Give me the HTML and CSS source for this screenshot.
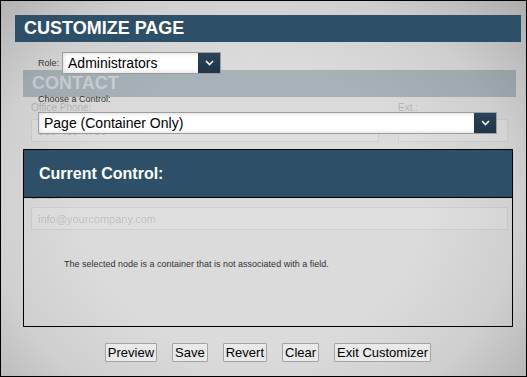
FILE: index.html
```html
<!DOCTYPE html>
<html lang="en">
  <head>
    <meta charset="UTF-8" />
    <meta name="viewport" content="width=device-width, initial-scale=1.0" />
    <title>Customize Page</title>
    <link rel="stylesheet" href="styles.css">
  </head>
  <body>
    <div class="page">
      <div class="section-title">CONTACT</div>
      <div class="fields">
        <div class="field-row">
          <div class="field phone">
            <div class="field-label">Office Phone:</div>
            <div class="field-input">610-455-4700</div>
          </div>
          <div class="field ext">
            <div class="field-label">Ext.:</div>
            <div class="field-input"></div>
          </div>
        </div>
        <div class="field email">
          <div class="field-label">Email:</div>
          <div class="field-input placeholder">info@yourcompany.com</div>
        </div>
      </div>
    </div>

    <div class="customizer">
      <h1 class="cust-title">CUSTOMIZE PAGE</h1>

      <div class="role-row">
        <span class="small-label">Role:</span>
        <div class="select role-select">
          <span class="select-value">Administrators</span>
          <span class="select-btn">
            <svg width="9" height="6" viewBox="0 0 9 6"><path d="M1 1 L4.5 4.5 L8 1" fill="none" stroke="#fff" stroke-width="1.6"/></svg>
          </span>
        </div>
      </div>

      <div class="small-label choose-label">Choose a Control:</div>
      <div class="select control-select">
        <span class="select-value">Page (Container Only)</span>
        <span class="select-btn">
          <svg width="9" height="6" viewBox="0 0 9 6"><path d="M1 1 L4.5 4.5 L8 1" fill="none" stroke="#fff" stroke-width="1.6"/></svg>
        </span>
      </div>

      <div class="current-box">
        <div class="current-head">Current Control:</div>
        <div class="current-body">
          <p class="current-msg">The selected node is a container that is not associated with a field.</p>
        </div>
      </div>

      <div class="actions">
        <button class="action-btn">Preview</button>
        <button class="action-btn">Save</button>
        <button class="action-btn">Revert</button>
        <button class="action-btn">Clear</button>
        <button class="action-btn">Exit Customizer</button>
      </div>
    </div>
  </body>
</html>
```

FILE: styles.css
```css
* {
  box-sizing: border-box;
  margin: 0;
  padding: 0;
}
html,
body {
  width: 527px;
  height: 377px;
  overflow: hidden;
}
body {
  position: relative;
  border: 1px solid #000;
  font-family: "Liberation Sans", Arial, sans-serif;
  background: radial-gradient(
    ellipse 72% 85% at 48% 55%,
    #dbdbdb 45%,
    #cfcfcf 70%,
    #a9a9a9 100%
  );
}

/* faded page underneath the customizer */
.page {
  padding: 69px 10px 0 22px;
}
.section-title {
  height: 27px;
  line-height: 27px;
  padding-left: 9px;
  font-size: 18px;
  font-weight: bold;
  color: rgba(255, 255, 255, 0.4);
  background: rgba(45, 80, 104, 0.3);
}
.fields {
  padding: 0 8px;
}
.field-row {
  display: flex;
  gap: 19px;
}
.field.phone {
  width: 348px;
}
.field.ext {
  width: 110px;
}
.field-label {
  margin-top: 5px;
  font-size: 10px;
  line-height: 12px;
  color: rgba(0, 0, 0, 0.2);
}
.field.email .field-label {
  margin-top: 48px;
}
.field-input {
  margin-top: 5px;
  height: 23px;
  line-height: 23px;
  padding-left: 6px;
  font-size: 11px;
  color: rgba(0, 0, 0, 0.2);
  border: 1px solid rgba(0, 0, 0, 0.07);
  background: rgba(255, 255, 255, 0.12);
}
.field-input.placeholder {
  color: rgba(0, 0, 0, 0.17);
}

/* customizer overlay */
.customizer {
  position: absolute;
  top: 0;
  left: 0;
  right: 0;
  bottom: 0;
  padding: 14px 5px 0 14px;
}
.cust-title {
  height: 27px;
  line-height: 27px;
  padding-left: 9px;
  font-size: 18px;
  font-weight: bold;
  color: #fff;
  background: #2d5068;
}
.small-label {
  font-size: 9px;
  line-height: 11px;
  color: #333;
}
.role-row {
  display: flex;
  align-items: center;
  gap: 3px;
  margin-top: 10px;
  padding-left: 23px;
}
.choose-label {
  margin-top: 20px;
  padding-left: 23px;
}
.select {
  display: flex;
  height: 22px;
  border: 1px solid #9c9c9c;
  background: #fff;
  box-shadow: inset 0 0 5px rgba(0, 0, 0, 0.18);
}
.role-select {
  width: 159px;
}
.control-select {
  width: 459px;
  margin: 7px 0 0 23px;
}
.select-value {
  flex: 1;
  padding-left: 5px;
  font-size: 14px;
  line-height: 20px;
  color: #000;
}
.control-select .select-value {
  padding-left: 5px;
}
.select-btn {
  width: 22px;
  display: flex;
  align-items: center;
  justify-content: center;
  background: linear-gradient(#2a4459, #1f3548);
}

.current-box {
  margin: 15px 8px 0;
  border: 1px solid #000;
}
.current-head {
  height: 48px;
  line-height: 47px;
  padding-left: 15px;
  font-size: 16px;
  font-weight: bold;
  color: #fff;
  background: #2d5068;
  border-bottom: 1px solid #000;
}
.current-body {
  height: 128px;
  padding: 61px 0 0 40px;
}
.current-msg {
  font-size: 9px;
  line-height: 11px;
  color: #333;
}

.actions {
  display: flex;
  justify-content: center;
  gap: 15px;
  margin-top: 16px;
}
.action-btn {
  font-family: "Liberation Sans", Arial, sans-serif;
  font-size: 13px;
  line-height: 17px;
  padding: 0 2px;
  color: #000;
  background: #e9e9e9;
  border: 1px solid #a3a3a3;
  border-radius: 1px;
}
```
